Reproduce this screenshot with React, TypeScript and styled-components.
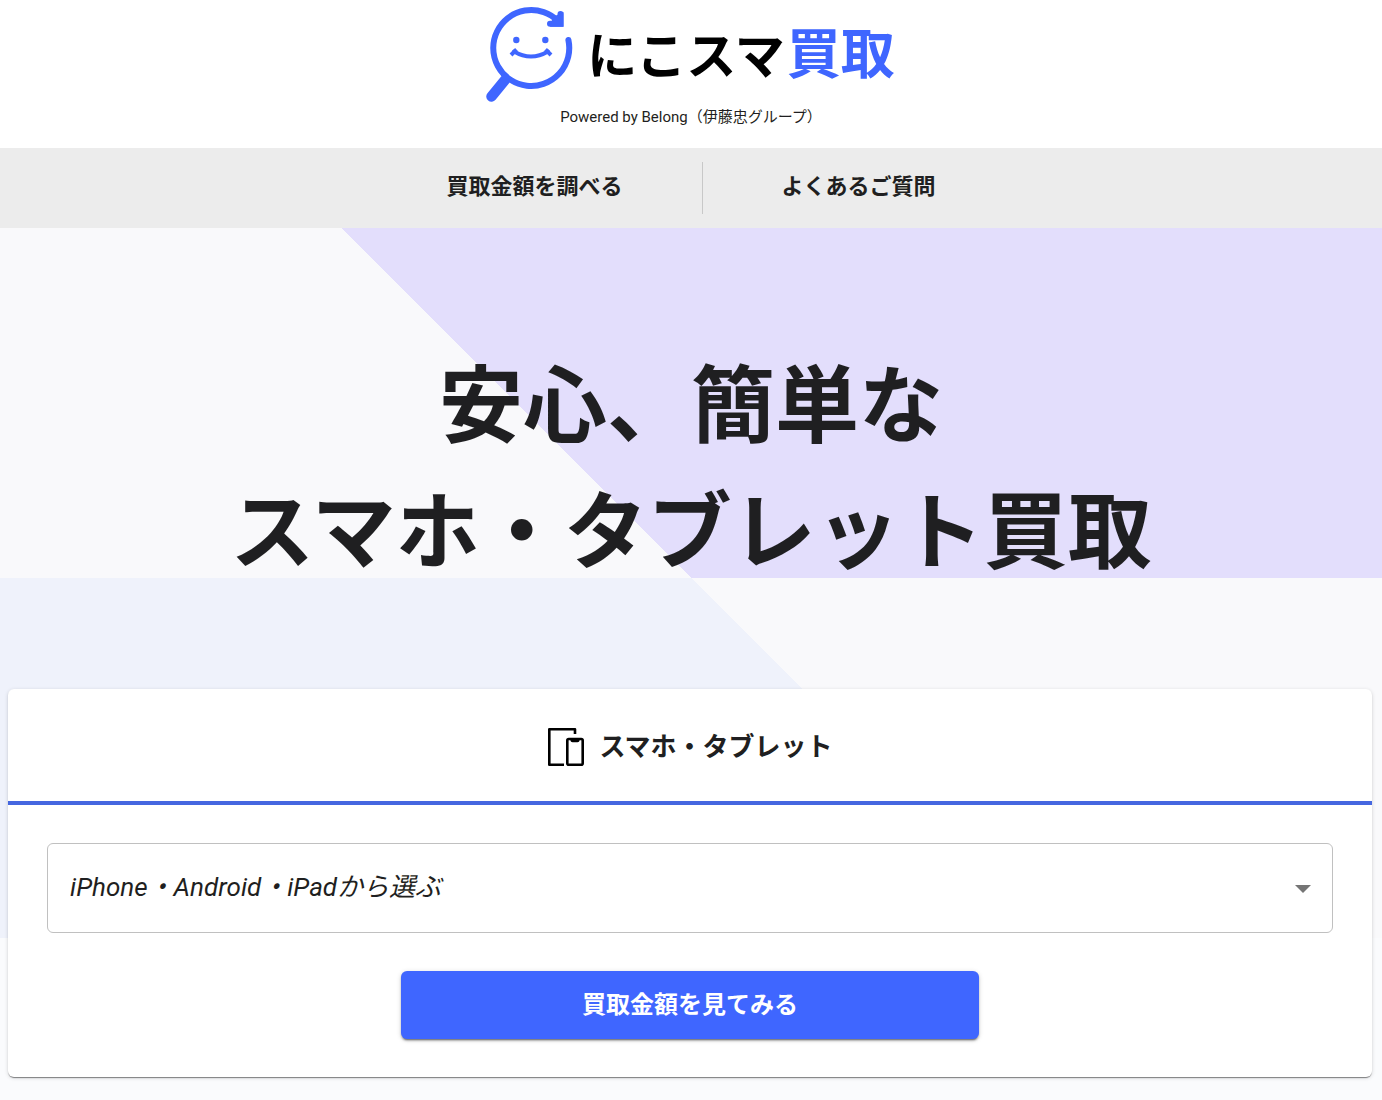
import React from "react";
import styled, { createGlobalStyle } from "styled-components";

const blue = "#3f66ff";
const ink = "#1f1f21";

const GlobalStyle = createGlobalStyle`
  *, *::before, *::after { box-sizing: border-box; }
  body {
    margin: 0;
    background: #fafbfd;
    color: ${ink};
    font-family: Roboto, "Noto Sans CJK JP", sans-serif;
  }
`;

const Header = styled.header`
  display: flex;
  flex-direction: column;
  align-items: center;
  height: 148px;
  padding-top: 5px;
  background: #fff;
`;

const Logo = styled.a`
  display: flex;
  align-items: center;
  gap: 12px;
  color: #000;
  text-decoration: none;
`;

const LogoMark = styled.svg`
  display: block;
  width: 88px;
  height: 97px;
`;

const Wordmark = styled.span`
  display: flex;
  align-items: baseline;
  gap: 2px;
  padding-top: 6px;
  font-size: 50px;
  line-height: 60px;
  font-weight: 700;
`;

const WordmarkAccent = styled.span`
  color: ${blue};
  font-size: 54px;
`;

const Powered = styled.p`
  margin: 4px 0 0;
  font-size: 15px;
  line-height: 22px;
`;

const Nav = styled.nav`
  display: flex;
  justify-content: center;
  height: 80px;
  padding: 14px 0;
  background: #ececec;
`;

const NavLink = styled.a`
  display: flex;
  align-items: center;
  padding: 0 79px 2px;
  color: ${ink};
  font-size: 22px;
  line-height: 32px;
  font-weight: 700;
  text-decoration: none;

  & + & {
    border-left: 1px solid #c8c8c8;
  }
`;

const Hero = styled.main`
  padding-top: 117px;
  background: conic-gradient(
      from -45deg at 50% 350px,
      #e3defc 0deg 135deg,
      #f9f9fb 135deg 180deg,
      #eff2fb 180deg 315deg,
      #f9f9fb 315deg
    )
    no-repeat 0 0 / 100% 710px;
`;

const Heading = styled.h1`
  margin: 0 0 92px;
  font-size: 84px;
  line-height: 126px;
  font-weight: 700;
  text-align: center;
`;

const Card = styled.section`
  margin: 0 10px 22px 8px;
  border-radius: 6px;
  background: #fff;
  box-shadow: 0 2px 1px -1px rgba(0, 0, 0, 0.3), 0 1px 1px rgba(0, 0, 0, 0.2),
    0 1px 4px rgba(0, 0, 0, 0.14);
`;

const Tab = styled.button`
  display: flex;
  align-items: center;
  justify-content: center;
  gap: 14px;
  width: 100%;
  height: 116px;
  padding: 4px 0 0;
  border: 0;
  border-bottom: 4px solid #4567e0;
  background: none;
  color: ${ink};
  font: inherit;
  font-size: 26px;
  line-height: 38px;
  font-weight: 700;
`;

const DeviceIcon = styled.svg`
  display: block;
  width: 38px;
  height: 40px;
`;

const Form = styled.form`
  display: flex;
  flex-direction: column;
  align-items: center;
  gap: 38px;
  padding: 38px 39px;
`;

const SelectBox = styled.div`
  position: relative;
  width: 100%;
`;

const Select = styled.select`
  display: block;
  width: 100%;
  height: 90px;
  padding: 0 60px 2px 22px;
  border: 1px solid #c0c0c0;
  border-radius: 6px;
  appearance: none;
  background: #fff;
  color: ${ink};
  font: inherit;
  font-size: 26px;
  font-style: italic;
`;

const Caret = styled.svg`
  position: absolute;
  top: 42px;
  right: 22px;
  width: 16px;
  height: 8px;
  pointer-events: none;
`;

const Submit = styled.button`
  width: 578px;
  max-width: 100%;
  height: 68px;
  padding: 0 0 6px;
  border: 0;
  border-radius: 6px;
  background: ${blue};
  color: #fff;
  font: inherit;
  font-size: 24px;
  font-weight: 700;
  box-shadow: 0 3px 1px -2px rgba(0, 0, 0, 0.3), 0 2px 2px rgba(0, 0, 0, 0.24),
    0 1px 5px rgba(0, 0, 0, 0.16);
`;

export default function App() {
  return (
    <>
      <GlobalStyle />
      <Header>
        <Logo href="#">
          <LogoMark viewBox="487 5 88 97" fill="none" stroke={blue} strokeLinecap="round" aria-hidden="true" overflow="visible">
            <path d="M568.4 40A38 38 0 1 1 558 21" strokeWidth="6" />
            <path d="M560.5 14V23.7H550" strokeWidth="6" />
            <path d="M553 17L563.5 12V26.7H550Z" fill={blue} stroke="none" />
            <path d="M491.5 96.5L505 80" strokeWidth="10.5" />
            <circle cx="516.3" cy="40" r="3.2" fill={blue} stroke="none" />
            <circle cx="545.3" cy="40" r="3.2" fill={blue} stroke="none" />
            <path d="M514 51.5Q531 61.5 548 51.5" strokeWidth="4" />
            <path d="M511 55L516.5 49.5M545.5 49.5L551 55" strokeWidth="4" strokeLinecap="butt" />
          </LogoMark>
          <Wordmark>
            <span>にこスマ</span>
            <WordmarkAccent>買取</WordmarkAccent>
          </Wordmark>
        </Logo>
        <Powered>Powered by Belong（伊藤忠グループ）</Powered>
      </Header>
      <Nav>
        <NavLink href="#search">買取金額を調べる</NavLink>
        <NavLink href="#faq">よくあるご質問</NavLink>
      </Nav>
      <Hero>
        <Heading>
          安心、簡単な
          <br />
          スマホ・タブレット買取
        </Heading>
        <Card id="search">
          <Tab type="button">
            <DeviceIcon viewBox="0 0 38 40" fill="none" stroke="#000" strokeWidth="2.6" aria-hidden="true">
              <path d="M28 7V2.3H2.3V37.7H17" strokeLinejoin="round" />
              <rect x="20.3" y="12" width="15.4" height="25.7" rx="1.5" />
              <path d="M23.5 12H32.5V13.5Q32.5 15.3 30.5 15.3H25.5Q23.5 15.3 23.5 13.5Z" fill="#000" stroke="none" />
            </DeviceIcon>
            スマホ・タブレット
          </Tab>
          <Form onSubmit={(event) => event.preventDefault()}>
            <SelectBox>
              <Select aria-label="機種" defaultValue="">
                <option value="">iPhone・Android・iPadから選ぶ</option>
              </Select>
              <Caret viewBox="0 0 16 8" aria-hidden="true">
                <path d="M0 0H16L8 8Z" fill="#757575" />
              </Caret>
            </SelectBox>
            <Submit type="submit">買取金額を見てみる</Submit>
          </Form>
        </Card>
      </Hero>
    </>
  );
}
